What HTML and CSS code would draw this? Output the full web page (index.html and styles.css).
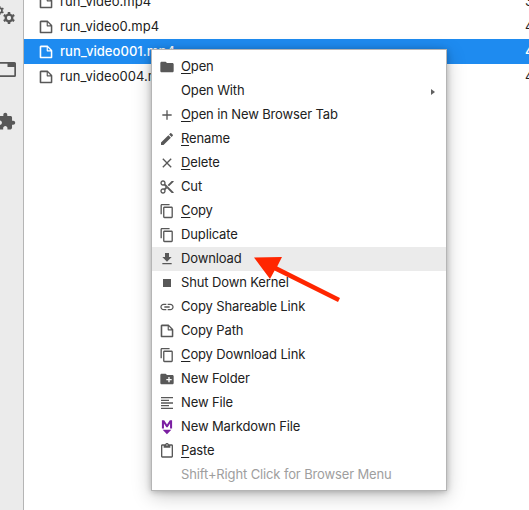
FILE: index.html
```html
<!DOCTYPE html>
<html lang="en">
<head>
<meta charset="utf-8">
<title>File Browser</title>
<link rel="stylesheet" href="styles.css">
</head>
<body>
<svg class="sprite" aria-hidden="true">
  <symbol id="file" viewBox="0 0 22 22"><path d="M19.3 8.2l-5.5-5.5c-.3-.3-.7-.5-1.2-.5H3.9c-.8.1-1.6.9-1.6 1.8v14.1c0 .9.7 1.6 1.6 1.6h14.2c.9 0 1.6-.7 1.6-1.6V9.400c.1-.5-.1-.9-.4-1.2zm-5.800-3.300l3.400 3.600h-3.400V4.900zm3.900 12.700H4.700c-.1 0-.2 0-.2-.2V4.700c0-.2.1-.3.2-.3h7.200v4.400s0 .8.3 1.100c.3.3 1.100.3 1.100.3h4.300v7.200s-.1.2-.2.2z"/></symbol>
  <symbol id="folder" viewBox="0 0 24 24"><path d="M10 4H4c-1.100 0-1.990.9-1.990 2L2 18c0 1.100.9 2 2 2h16c1.100 0 2-.9 2-2V8c0-1.100-.9-2-2-2h-8l-2-2z"/></symbol>
  <symbol id="add" viewBox="0 0 24 24"><path d="M19 13h-6v6h-2v-6H5v-2h6V5h2v6h6v2z"/></symbol>
  <symbol id="edit" viewBox="0 0 24 24"><path d="M3 17.250V21h3.750L17.810 9.940l-3.750-3.750L3 17.250zM20.710 7.040c.39-.39.39-1.020 0-1.410l-2.340-2.340c-.39-.39-1.020-.39-1.410 0l-1.830 1.830 3.750 3.750 1.830-1.830z"/></symbol>
  <symbol id="close" viewBox="0 0 24 24"><path d="M19 6.410L17.590 5 12 10.590 6.410 5 5 6.410 10.590 12 5 17.590 6.410 19 12 13.410 17.590 19 19 17.590 13.410 12z"/></symbol>
  <symbol id="cut" viewBox="0 0 24 24"><path d="M9.640 7.640c.23-.5.36-1.050.36-1.640 0-2.210-1.790-4-4-4S2 3.790 2 6s1.790 4 4 4c.59 0 1.140-.13 1.640-.36L10 12l-2.360 2.360C7.140 14.130 6.590 14 6 14c-2.210 0-4 1.790-4 4s1.790 4 4 4 4-1.790 4-4c0-.59-.13-1.140-.36-1.640L12 14l7 7h3v-1L9.640 7.640zM6 8c-1.100 0-2-.89-2-2s.9-2 2-2 2 .89 2 2-.9 2-2 2zm0 12c-1.100 0-2-.89-2-2s.9-2 2-2 2 .89 2 2-.9 2-2 2zm6-7.500c-.28 0-.5-.22-.5-.5s.22-.5.5-.5.5.22.5.5-.22.5-.5.5zM19 3l-6 6 2 2 7-7V3z"/></symbol>
  <symbol id="copy" viewBox="0 0 18 18"><path d="M11.900 1H3.200C2.400 1 1.700 1.700 1.700 2.500v10.200h1.500V2.500h8.700V1zm2.200 3H6.100C5.300 4 4.600 4.700 4.600 5.500v10.100c0 .8.7 1.500 1.500 1.500h8c.8 0 1.500-.7 1.500-1.500V5.500c0-.8-.7-1.500-1.500-1.500zm0 11.600h-8V5.500h8v10.100z"/></symbol>
  <symbol id="download" viewBox="0 0 24 24"><path d="M19 9h-4V3H9v6H5l7 7 7-7zM5 18v2h14v-2H5z"/></symbol>
  <symbol id="stop" viewBox="0 0 24 24"><path d="M6 6h12v12H6z"/></symbol>
  <symbol id="link" viewBox="0 0 24 24"><path d="M3.900 12c0-1.710 1.390-3.100 3.100-3.100h4V7H7c-2.760 0-5 2.240-5 5s2.240 5 5 5h4v-1.900H7c-1.710 0-3.100-1.390-3.100-3.100zM8 13h8v-2H8v2zm9-6h-4v1.900h4c1.710 0 3.100 1.390 3.100 3.100s-1.390 3.100-3.100 3.100h-4V17h4c2.760 0 5-2.240 5-5s-2.240-5-5-5z"/></symbol>
  <symbol id="new-folder" viewBox="0 0 24 24"><path d="M20 6h-8l-2-2H4c-1.110 0-1.990.89-1.990 2L2 18c0 1.110.89 2 2 2h16c1.110 0 2-.89 2-2V8c0-1.110-.89-2-2-2zm-1 8h-3v3h-2v-3h-3v-2h3V9h2v3h3v2z"/></symbol>
  <symbol id="text" viewBox="0 0 24 24"><path d="M15 15H3v2h12v-2zm0-8H3v2h12V7zM3 13h18v-2H3v2zm0 8h18v-2H3v2zM3 3v2h18V3H3z"/></symbol>
  <symbol id="markdown" viewBox="0 0 22 22"><path d="M5 14.900h12l-6.100 6zM4 12.900V1.600h3.100L11 7.700l3.900-6.100H18v11.300h-2.800V6.200L11.900 11.200h-1.800L6.800 6.200v6.700z"/></symbol>
  <symbol id="paste" viewBox="0 0 24 24"><path d="M19 2h-4.180C14.400.84 13.300 0 12 0c-1.300 0-2.400.84-2.820 2H5c-1.100 0-2 .9-2 2v16c0 1.100.9 2 2 2h14c1.100 0 2-.9 2-2V4c0-1.100-.9-2-2-2zm-7 0c.55 0 1 .45 1 1s-.45 1-1 1-1-.45-1-1 .45-1 1-1zm7 18H5V4h2v3h10V4h2v16z"/></symbol>
  <symbol id="extension" viewBox="0 0 24 24"><path d="M20.500 11H19V7c0-1.100-.9-2-2-2h-4V3.500C13 2.120 11.880 1 10.500 1S8 2.120 8 3.500V5H4c-1.100 0-1.990.9-1.990 2v3.800H3.500c1.490 0 2.700 1.210 2.700 2.700s-1.210 2.700-2.700 2.700H2V20c0 1.100.9 2 2 2h3.800v-1.500c0-1.490 1.210-2.700 2.700-2.700s2.700 1.210 2.700 2.700V22H17c1.100 0 2-.9 2-2v-4h1.500c1.380 0 2.500-1.120 2.500-2.500S21.880 11 20.500 11z"/></symbol>
  <symbol id="gear" viewBox="-12 -12 24 24"><g fill="none" stroke="currentColor"><circle r="6.600" stroke-width="4.600"/><path stroke-width="5" d="M0-12V-8M0 12V8M-10.400-6L-7-4M10.400 6L7 4M-10.400 6L-7 4M10.400-6L7-4"/></g></symbol>
</svg>

<div class="app">
  <nav class="sidebar">
    <div class="gears"><svg class="gear-small"><use href="#gear"/></svg><svg class="gear-large"><use href="#gear"/></svg></div>
    <svg class="tabs" viewBox="0 0 20 15"><path fill-rule="evenodd" d="M2 0h16.500q1.500 0 1.500 1.500v12q0 1.500-1.500 1.500H2zM3 1.700v11.600h15.300V5H11.500V1.700z"/></svg>
    <svg class="puzzle"><use href="#extension"/></svg>
  </nav>
  <main class="listing">
    <div class="file"><svg class="icon"><use href="#file"/></svg><span class="name">run_video.mp4</span><span class="modified">3 days ago</span></div>
    <div class="file"><svg class="icon"><use href="#file"/></svg><span class="name">run_video0.mp4</span><span class="modified">4 days ago</span></div>
    <div class="file selected"><svg class="icon"><use href="#file"/></svg><span class="name">run_video001.mp4</span><span class="modified">4 days ago</span></div>
    <div class="file"><svg class="icon"><use href="#file"/></svg><span class="name">run_video004.mp4</span><span class="modified">4 days ago</span></div>
  </main>
</div>

<ul class="menu">
  <li><svg class="icon"><use href="#folder"/></svg><span><u>O</u>pen</span></li>
  <li><i class="icon"></i><span>Open With</span><svg class="submenu" viewBox="0 0 4 6"><path d="M0 0l4 3-4 3z"/></svg></li>
  <li><svg class="icon"><use href="#add"/></svg><span><u>O</u>pen in New Browser Tab</span></li>
  <li><svg class="icon"><use href="#edit"/></svg><span><u>R</u>ename</span></li>
  <li><svg class="icon"><use href="#close"/></svg><span><u>D</u>elete</span></li>
  <li><svg class="icon"><use href="#cut"/></svg><span>Cut</span></li>
  <li><svg class="icon"><use href="#copy"/></svg><span><u>C</u>opy</span></li>
  <li><svg class="icon"><use href="#copy"/></svg><span>Duplicate</span></li>
  <li class="active"><svg class="icon"><use href="#download"/></svg><span>Download</span></li>
  <li><svg class="icon"><use href="#stop"/></svg><span>Shut Down Kernel</span></li>
  <li><svg class="icon"><use href="#link"/></svg><span>Copy Shareable Link</span></li>
  <li><svg class="icon"><use href="#file"/></svg><span>Copy Path</span></li>
  <li><svg class="icon"><use href="#copy"/></svg><span><u>C</u>opy Download Link</span></li>
  <li><svg class="icon"><use href="#new-folder"/></svg><span>New Folder</span></li>
  <li><svg class="icon"><use href="#text"/></svg><span>New File</span></li>
  <li><svg class="icon purple"><use href="#markdown"/></svg><span>New Markdown File</span></li>
  <li><svg class="icon"><use href="#paste"/></svg><span><u>P</u>aste</span></li>
  <li class="disabled"><i class="icon"></i><span>Shift+Right Click for Browser Menu</span></li>
</ul>
<svg class="arrow" viewBox="0 0 88 46"><path d="M1 1.500L29 1 24.200 10.500 87 42 85 46 21.600 14.600 17 23z"/></svg>
</body>
</html>
```
FILE: styles.css
```css
* { box-sizing: border-box; }
body {
  margin: 0;
  width: 529px;
  height: 510px;
  overflow: hidden;
  background: #fff;
  color: #212121;
  font: 13px/24px Inter, "Liberation Sans", sans-serif;
}
.sprite { position: absolute; width: 0; height: 0; }
svg { fill: currentColor; flex: none; }
.app { display: flex; height: 510px; overflow: hidden; }
.sidebar {
  display: flex;
  flex-direction: column;
  align-items: flex-end;
  width: 24px;
  padding: 6px 7px 0 0;
  background: #ebebeb;
  border-right: 1px solid #b5b5b5;
  color: #585858;
  flex: none;
}
.gears { display: flex; height: 19px; margin-right: 1px; }
.gear-small { width: 9px; height: 9px; }
.gear-large { width: 12px; height: 12px; margin-top: 6px; margin-left: -1px; }
.tabs { width: 20px; height: 15px; margin-top: 37px; }
.puzzle { width: 19px; height: 19px; margin-top: 35px; }
.listing { flex: 1; min-width: 0; margin-top: -11px; overflow: hidden; }
.file {
  display: flex;
  align-items: center;
  height: 25px;
  padding-left: 14px;
  white-space: nowrap;
}
.file span { padding-bottom: 1px; }
.icon { width: 16px; height: 16px; flex: none; color: #585858; }
.file .name { width: 465px; margin-left: 6px; flex: none; letter-spacing: .06px; }
.selected { background: #1e8bf0; color: #fff; font-weight: 500; }
.selected .icon { color: #fff; }
.menu {
  position: absolute;
  left: 151px;
  top: 49px;
  width: 296px;
  height: 442px;
  margin: 0;
  padding: 5px 0 3px;
  list-style: none;
  background: #fff;
  border: 1px solid #b5b5b5;
  box-shadow: 0 1px 6px rgba(0,0,0,.24), 0 5px 18px rgba(0,0,0,.22);
}
.menu li {
  display: flex;
  align-items: center;
  height: 24px;
  padding-left: 7px;
  white-space: nowrap;
}
.menu span { margin-left: 6px; padding-bottom: 2px; letter-spacing: -.13px; }
.menu u { text-underline-offset: 2px; text-decoration-thickness: 1px; text-decoration-skip-ink: none; }
.menu .active { background: #ebebeb; }
.menu .disabled { color: #9e9e9e; }
.menu .purple { color: #7b1fa2; }
.submenu { width: 4px; height: 6px; margin: 2px 11px 0 auto; color: #616161; }
.arrow { position: absolute; left: 253px; top: 256px; width: 88px; height: 46px; color: #ff2600; }
```
